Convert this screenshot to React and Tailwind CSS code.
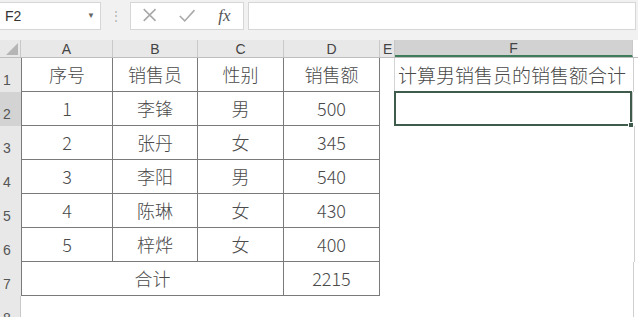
import React from "react";

const cols = [
  { key: "A", w: "w-[92px]" },
  { key: "B", w: "w-[85px]" },
  { key: "C", w: "w-[86px]" },
  { key: "D", w: "w-[96px]" },
  { key: "E", w: "w-[15px]" },
  { key: "F", w: "w-[238px]" },
];

const rows = [
  ["1", "李锋", "男", "500"],
  ["2", "张丹", "女", "345"],
  ["3", "李阳", "男", "540"],
  ["4", "陈琳", "女", "430"],
  ["5", "梓烨", "女", "400"],
];

const cellFont = { fontFamily: '"Noto Sans CJK SC", "Noto Sans", sans-serif' };

function RowHead({ n, active, dark }) {
  return (
    <div
      className={`w-[21px] shrink-0 flex items-end pl-[3px] pb-[1px] text-[14px] text-[#555] ${
        active ? "bg-[#d3d3d3]" : "bg-[#e8e8e8]"
      } ${dark ? "" : "border-r border-[#c9c9c9]"}`}
      style={{ fontFamily: '"Liberation Sans", sans-serif' }}
    >
      {n}
    </div>
  );
}

function Cell({ w, children, left }) {
  return (
    <div
      className={`${w} shrink-0 flex items-center justify-center border-r border-b border-[#7a7a7a] text-[18px] font-light text-[#4a4a4a] ${
        left ? "border-l" : ""
      }`}
      style={cellFont}
    >
      {children}
    </div>
  );
}

function Tail({ first, selected }) {
  return (
    <>
      <div className={`w-[15px] shrink-0 ${first || selected ? "border-r border-[#d4d4d4]" : "mr-[1px]"}`} />
      {first ? (
        <div
          className="w-[238px] shrink-0 flex items-center pl-[3px] text-[19px] font-light text-[#4a4a4a] whitespace-nowrap"
          style={cellFont}
        >
          计算男销售员的销售额合计
        </div>
      ) : selected ? (
        <div className="w-[238px] shrink-0 relative border-2 border-[#3e5b4b] -ml-[1px] -mt-[1px]">
          <div className="absolute -right-[4px] -bottom-[4px] w-[6px] h-[6px] bg-[#3e5b4b] border border-white" />
        </div>
      ) : (
        <div className="w-[238px] shrink-0" />
      )}
      <div className="flex-1 border-l border-[#cfcfcf]" />
    </>
  );
}

export default function App() {
  return (
    <div className="w-[638px] h-[317px] overflow-hidden bg-white" style={{ fontFamily: '"Liberation Sans", sans-serif' }}>
      {/* formula bar */}
      <div className="h-[40px] bg-[#f1f1f1] flex items-start pt-[2px] relative">
        <div className="w-[101px] h-[28px] bg-white border border-[#d6d6d6] border-l-0 flex items-center justify-between pl-[5px] pr-[5px]">
          <span className="text-[14px] text-[#333]">F2</span>
          <span className="text-[8px] text-[#666]">▼</span>
        </div>
        <div className="w-[29px] h-[28px] flex items-center justify-center text-[#b0b0b0] text-[12px]">⋮</div>
        <div className="w-[114px] h-[28px] bg-white border border-[#d6d6d6] flex items-center">
          <svg width="38" height="28" viewBox="0 0 38 28">
            <path d="M13 7 L25 19 M25 7 L13 19" stroke="#a9a9a9" strokeWidth="1.6" fill="none" />
          </svg>
          <svg width="38" height="28" viewBox="0 0 38 28">
            <path d="M12 14 L17 19 L27 8" stroke="#a9a9a9" strokeWidth="1.6" fill="none" />
          </svg>
          <span
            className="w-[38px] text-center italic text-[17px] text-[#555]"
            style={{ fontFamily: '"Liberation Serif", serif' }}
          >
            fx
          </span>
        </div>
        <div className="ml-[4px] w-[388px] h-[28px] bg-white border border-[#d6d6d6]" />
      </div>

      {/* column header */}
      <div className="h-[18px] flex bg-[#e8e8e8] border-b border-[#bdbdbd] text-[14px] text-[#444]">
        <div className="w-[21px] shrink-0 border-r border-[#c9c9c9] flex items-end justify-end pr-[2px] pb-[2px]">
          <svg width="12" height="12" viewBox="0 0 12 12">
            <path d="M12 0 L12 12 L0 12 Z" fill="#b5b5b5" />
          </svg>
        </div>
        {cols.map((c) => (
          <div
            key={c.key}
            className={`${c.w} shrink-0 flex items-center justify-center border-r border-[#c9c9c9] leading-none ${
              c.key === "F" ? "bg-[#d2d2d2] border-b-2 border-b-[#3e7d5c]" : ""
            } ${c.key === "E" ? "justify-start pl-[3px]" : ""}`}
          >
            {c.key}
          </div>
        ))}
        <div className="flex-1 bg-white" />
      </div>

      {/* row 1 */}
      <div className="h-[34px] flex">
        <RowHead n="1" dark />
        <Cell w="w-[92px]" left>序号</Cell>
        <Cell w="w-[85px]">销售员</Cell>
        <Cell w="w-[86px]">性别</Cell>
        <Cell w="w-[96px]">销售额</Cell>
        <Tail first />
      </div>

      {rows.map((r, i) => (
        <div key={i} className="h-[34px] flex">
          <RowHead n={String(i + 2)} active={i === 0} dark />
          <Cell w="w-[92px]" left>{r[0]}</Cell>
          <Cell w="w-[85px]">{r[1]}</Cell>
          <Cell w="w-[86px]">{r[2]}</Cell>
          <Cell w="w-[96px]">{r[3]}</Cell>
          <Tail selected={i === 0} />
        </div>
      ))}

      {/* row 7 */}
      <div className="h-[34px] flex">
        <RowHead n="7" dark />
        <Cell w="w-[263px]" left>合计</Cell>
        <Cell w="w-[96px]">2215</Cell>
        <div className="w-[15px] shrink-0" />
        <div className="w-[238px] shrink-0" />
        <div className="flex-1 border-l border-[#cfcfcf]" />
      </div>

      {/* row 8 */}
      <div className="h-[34px] flex">
        <RowHead n="8" />
        <div className="w-[612px] shrink-0" />
        <div className="flex-1 border-l border-[#cfcfcf]" />
      </div>
    </div>
  );
}
